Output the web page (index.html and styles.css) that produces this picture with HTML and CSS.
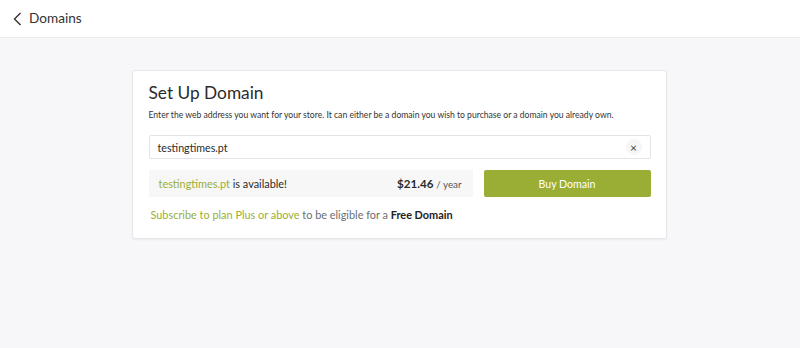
FILE: index.html
```html
<!DOCTYPE html>
<html lang="en">
<head>
    <meta charset="UTF-8">
    <title>Domains</title>
    <link rel="stylesheet" href="styles.css">
</head>
<body>
    <header class="top-bar">
        <a class="back" href="#">
            <svg width="9" height="14" viewBox="0 0 9 14"><path d="M7.5 1 L1.5 7 L7.5 13" fill="none" stroke="#333" stroke-width="1.4"/></svg>
        </a>
        <span class="page-title">Domains</span>
    </header>

    <main class="content">
        <div class="card">
            <h2 class="card-title">Set Up Domain</h2>
            <p class="card-desc">Enter the web address you want for your store. It can either be a domain you wish to purchase or a domain you already own.</p>

            <div class="domain-input">
                <span class="domain-value">testingtimes.pt</span>
                <span class="clear">&times;</span>
            </div>

            <div class="result-row">
                <div class="availability">
                    <span><span class="green">testingtimes.pt</span> is available!</span>
                    <span class="price">$21.46 <small>/ year</small></span>
                </div>
                <button class="buy-btn">Buy Domain</button>
            </div>

            <p class="upsell"><span class="green">Subscribe to plan Plus or above</span> to be eligible for a <strong>Free Domain</strong></p>
        </div>
    </main>
</body>
</html>
```

FILE: styles.css
```css
:root {
    --bg-color: #f7f7f9;
    --text-color: #2b2b2b;
    --muted: #6c6e73;
    --green: #9aae35;
    --border: #e3e4e8;
}

body {
    margin: 0;
    font-family: 'Lato', 'Liberation Sans', sans-serif;
    background-color: var(--bg-color);
    color: var(--text-color);
    height: 348px;
    overflow: hidden;
}

.top-bar {
    height: 37px;
    background: #fff;
    border-bottom: 1px solid #ececef;
    display: flex;
    align-items: center;
    padding: 0 0 0 13px;
}

.back {
    display: flex;
    align-items: center;
    margin-right: 7px;
}

.page-title {
    font-size: 13.6px;
    color: #333;
    margin-top: -1px;
}

.content {
    display: flex;
    justify-content: center;
    padding: 32px 2px 0 0;
}

.card {
    width: 535px;
    box-sizing: border-box;
    background: #fff;
    border: 1px solid #e6e7ea;
    border-radius: 3px;
    box-shadow: 0 1px 2px rgba(0,0,0,0.06);
    padding: 12px 15px 15px 16px;
}

.card-title {
    font-size: 17.3px;
    font-weight: 400;
    line-height: 20px;
    margin: 0;
}

.card-desc {
    font-size: 8.6px;
    line-height: 16px;
    margin: 4px 0 12px;
    color: #333;
}

.domain-input {
    height: 24px;
    box-sizing: border-box;
    border: 1px solid var(--border);
    border-radius: 2px;
    display: flex;
    align-items: center;
    justify-content: space-between;
    padding: 0 8px;
    font-size: 10.7px;
}

.clear {
    width: 16px;
    height: 16px;
    border-radius: 50%;
    background: #f6f6f8;
    display: flex;
    align-items: center;
    justify-content: center;
    font-size: 12px;
    color: #444;
}

.result-row {
    display: flex;
    gap: 11px;
    margin-top: 11px;
}

.availability {
    width: 324px;
    height: 27px;
    background: #f7f7f8;
    display: flex;
    align-items: center;
    justify-content: space-between;
    padding: 0 11px 0 10px;
    box-sizing: border-box;
    font-size: 10.9px;
}

.price {
    font-size: 11.6px;
    font-weight: 700;
}

.price small {
    font-size: 9.8px;
    font-weight: 400;
    color: #555;
}

.buy-btn {
    flex: 1;
    height: 27px;
    border: none;
    border-radius: 2px;
    background: var(--green);
    color: #fff;
    font-family: inherit;
    font-size: 10.6px;
}

.green {
    color: var(--green);
}

.upsell {
    margin: 10px 0 0 2px;
    font-size: 10.9px;
    line-height: 16px;
    color: var(--muted);
}

.upsell strong {
    color: #222;
}
```
